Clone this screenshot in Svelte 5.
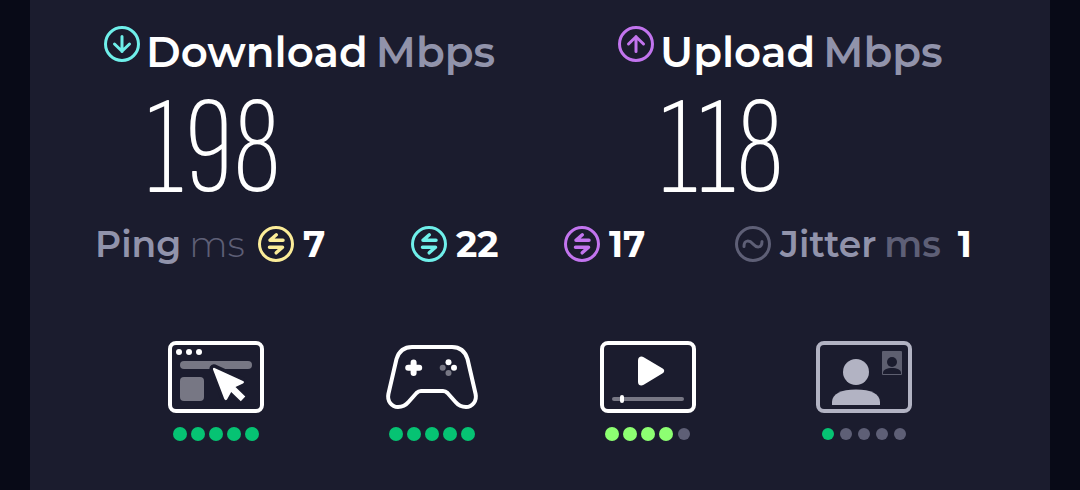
<script lang="ts">
	interface Speed {
		label: string;
		direction: 'down' | 'up';
		value: number;
	}

	interface Latency {
		name: string;
		value: number;
	}

	interface Rating {
		name: string;
		score: number;
		color: string;
	}

	const speeds: Speed[] = [
		{label: 'Download', direction: 'down', value: 198},
		{label: 'Upload', direction: 'up', value: 118},
	];

	const latencies: Latency[] = [
		{name: 'idle', value: 7},
		{name: 'down', value: 22},
		{name: 'up', value: 17},
	];

	const jitter = 1;

	const ratings: Rating[] = [
		{name: 'web', score: 5, color: 'green'},
		{name: 'gaming', score: 5, color: 'green'},
		{name: 'video', score: 4, color: 'lime'},
		{name: 'chat', score: 1, color: 'green'},
	];
</script>

<main class="panel">
	<section class="speeds">
		{#each speeds as speed (speed.label)}
			<div class="speed">
				<svg class="badge {speed.direction}" viewBox="0 0 36 36">
					<circle cx="18" cy="18" r="16.5" />
					{#if speed.direction === 'down'}
						<path d="M18 10.5v15M10.5 18l7.5 7.3 7.5-7.3" />
					{:else}
						<path d="M18 25.5V10.5M10.5 18l7.5-7.3 7.5 7.3" />
					{/if}
				</svg>
				<h2>{speed.label} <span class="unit">Mbps</span></h2>
				<div class="value">{speed.value}</div>
			</div>
		{/each}
	</section>

	<section class="latencies">
		{#each latencies as latency (latency.name)}
			<div class="latency">
				{#if latency.name === 'idle'}
					<div class="label">Ping <span class="light">ms</span></div>
				{/if}
				<svg class="badge {latency.name}" viewBox="0 0 36 36">
					<circle cx="18" cy="18" r="16.5" />
					<path class="swap" d="M25 14.3H12l6.3-5.5M11.5 21.3h13l-6.3 5.5" />
				</svg>
				<strong>{latency.value}</strong>
			</div>
		{/each}
		<div class="latency">
			<svg class="badge jitter" viewBox="0 0 36 36">
				<circle cx="18" cy="18" r="16.5" />
				<path d="M9 20.5c0-7 5.5-6.5 9-2.5s9 4.5 9-2.5" />
			</svg>
			<div class="label">Jitter <span class="dim">ms</span></div>
			<strong class="last">{jitter}</strong>
		</div>
	</section>

	<section class="ratings">
		{#each ratings as rating (rating.name)}
			<div class="rating">
				<svg class="picture" viewBox="0 0 96 72">
					{#if rating.name === 'web'}
						<rect class="frame" x="2" y="2" width="92" height="68" rx="6" />
						<circle class="fill" cx="11" cy="11" r="3" />
						<circle class="fill" cx="21" cy="11" r="3" />
						<circle class="fill" cx="31" cy="11" r="3" />
						<rect class="grey" x="12" y="20" width="72" height="8" rx="4" />
						<rect class="grey" x="12" y="36" width="24" height="24" rx="4" />
						<path
							class="pointer"
							d="M46 26.8 75 40q2 1.2 0 2.5l-7.5 3.5L77.3 55.4 72.8 60.3 63.2 51 59 58.5q-1.5 1.5-2.7-.5L45 28.5q-.5-1.5 1-1.7z"
						/>
						<path
							class="fill"
							d="M46 26.8 75 40q2 1.2 0 2.5l-7.5 3.5L77.3 55.4 72.8 60.3 63.2 51 59 58.5q-1.5 1.5-2.7-.5L45 28.5q-.5-1.5 1-1.7z"
						/>
					{:else if rating.name === 'gaming'}
						<path
							class="frame"
							d="M28 6H68C76 6 81 10 83.5 18L91.6 53C93 60 88.5 66 82 66C77 66 74 64 71.5 61L63.5 52Q61.5 50 59 50H37Q34.5 50 32.5 52L24.5 61C22 64 19 66 14 66C7.5 66 3 60 4.4 53L12.5 18C15 10 20 6 28 6z"
						/>
						<path class="cross" d="M29.6 21.5v10.5M24.2 26.7h11" />
						<circle class="fill" cx="64.5" cy="21.3" r="3" />
						<circle class="fill" cx="70" cy="26.7" r="3" />
						<circle class="grey" cx="58.7" cy="26.7" r="3" />
						<circle class="grey" cx="64.5" cy="32" r="3" />
					{:else if rating.name === 'video'}
						<rect class="frame" x="2" y="2" width="92" height="68" rx="6" />
						<path
							class="fill"
							d="M38 19.5c0-3.5 3-5 5.7-3.3l19 11.3c2 1.2 2 3.5 0 4.7l-19 11.6c-2.7 1.7-5.7.5-5.7-2.8z"
						/>
						<rect class="grey" x="12" y="56" width="72" height="4" rx="2" />
						<rect class="fill" x="20" y="54" width="4" height="8" rx="2" />
					{:else}
						<g class="muted">
							<rect class="frame" x="2" y="2" width="92" height="68" rx="6" />
							<circle class="fill" cx="40" cy="31" r="13" />
							<path class="fill" d="M16 64v-3c0-8 9-12.5 24-12.5s24 4.5 24 12.5v3z" />
						</g>
						<rect class="tile" x="66" y="10" width="20" height="24" rx="1" />
						<circle class="hole" cx="76" cy="21" r="5" />
						<path class="hole" d="M67 33v-1c0-3.5 4-5 9-5s9 1.5 9 5v1z" />
					{/if}
				</svg>
				<div class="dots">
					{#each {length: 5} as _, i}
						<span class="dot {i < rating.score ? rating.color : ''}" class:small={rating.score === 1}
						></span>
					{/each}
				</div>
			</div>
		{/each}
	</section>
</main>

<style>
	:global(body) {
		background: #080a17;
	}
	.panel {
		min-height: 100vh;
		box-sizing: border-box;
		margin: 0 30px;
		padding-top: 26px;
		background: #1b1c2e;
		color: #fff;
		font-family: Montserrat, Inter, sans-serif;
	}
	.speeds {
		display: grid;
		grid-template-columns: 514fr 432fr;
		padding-left: 74px;
	}
	.speed {
		display: grid;
		grid-template-columns: 36px 1fr;
		column-gap: 6px;
	}
	.badge {
		flex: none;
		width: 36px;
		height: 36px;
		fill: none;
		stroke: currentColor;
		stroke-width: 3;
		stroke-linecap: round;
		stroke-linejoin: round;
	}
	.swap {
		stroke-width: 3.5;
	}
	.down {
		color: #6fefea;
	}
	.up {
		color: #c274ee;
	}
	.idle {
		color: #fbec98;
	}
	.jitter {
		color: #5e5f76;
	}
	h2 {
		display: flex;
		gap: 8px;
		margin: 0;
		font-size: 42px;
		font-weight: 600;
		line-height: 52px;
		white-space: nowrap;
	}
	.unit,
	.label {
		color: #9193ab;
	}
	.value {
		grid-column: 2;
		font-family: 'Sofia Sans Extra Condensed', 'Fira Sans Extra Condensed', 'Barlow Condensed', sans-serif;
		font-size: 140px;
		font-weight: 200;
		line-height: 144px;
	}
	.latencies {
		display: grid;
		grid-template-columns: 316fr 153fr 171fr 250fr;
		margin-top: 4px;
		padding: 0 65px;
	}
	.latency {
		display: flex;
		align-items: center;
		gap: 9px;
		height: 36px;
		font-size: 36px;
		font-weight: 600;
		white-space: nowrap;
	}
	.label {
		display: flex;
		gap: 8px;
	}
	.label:first-child {
		min-width: 154px;
	}
	.light {
		color: #5e5f76;
		font-weight: 300;
	}
	.dim {
		color: #5e5f76;
	}
	strong {
		font-weight: 700;
	}
	.last {
		margin-left: 8px;
	}
	.ratings {
		display: grid;
		grid-template-columns: repeat(4, 1fr);
		margin-top: 79px;
		padding: 0 78px;
	}
	.rating {
		display: flex;
		flex-direction: column;
		align-items: center;
		gap: 14px;
	}
	.picture {
		width: 96px;
		height: 72px;
		color: #fff;
	}
	.muted {
		color: #b2b3c3;
	}
	.frame {
		fill: none;
		stroke: currentColor;
		stroke-width: 4;
		stroke-linejoin: round;
	}
	.fill {
		fill: currentColor;
	}
	.grey {
		fill: #777784;
	}
	.pointer {
		fill: #1b1c2e;
		stroke: #1b1c2e;
		stroke-width: 7;
		stroke-linejoin: round;
	}
	.cross {
		stroke: currentColor;
		stroke-width: 6;
		stroke-linecap: round;
	}
	.tile {
		fill: #5e5f70;
	}
	.hole {
		fill: #1b1c2e;
	}
	.dots {
		display: flex;
		gap: 4px;
	}
	.dot {
		box-sizing: border-box;
		width: 14px;
		height: 14px;
		border: 1px solid transparent;
		border-radius: 50%;
		background: #5e5f76 padding-box;
	}
	.green {
		background: #06c373;
	}
	.lime {
		background: #8dff72;
	}
	.small {
		background-clip: padding-box;
	}
</style>
